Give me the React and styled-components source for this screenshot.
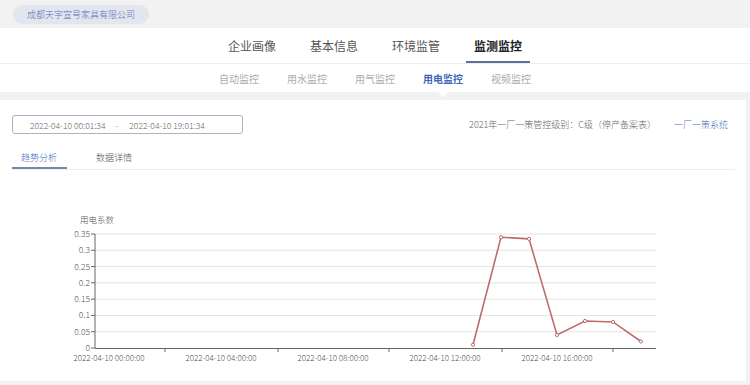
import React from "react"
import styled, { createGlobalStyle } from "styled-components"

const GlobalStyle = createGlobalStyle`
  body {
    margin: 0;
    background: #f2f2f2;
    font-family: "Noto Sans CJK SC", "Noto Sans", sans-serif;
    font-weight: 300;
  }
`

const Page = styled.div`
  width: 750px;
  height: 385px;
  overflow: hidden;
`

const TopBar = styled.div`
  height: 28px;
  display: flex;
  align-items: center;
  padding-left: 13px;
`

const CompanyPill = styled.div`
  height: 19px;
  line-height: 19px;
  padding: 0 14px;
  border-radius: 10px;
  background: #e3e6ef;
  color: #5b74b9;
  font-size: 9px;
`

const Header = styled.div`
  background: #fff;
`

const MainTabs = styled.div`
  height: 36px;
  display: flex;
  justify-content: center;
  gap: 18px;
  border-bottom: 1px solid #eeeeee;
  box-sizing: border-box;
`

const MainTab = styled.div`
  width: 64px;
  box-sizing: border-box;
  display: flex;
  align-items: center;
  justify-content: center;
  font-size: 12px;
  color: ${p => (p.active ? "#222" : "#555")};
  font-weight: ${p => (p.active ? "bold" : "normal")};
  border-bottom: 2px solid ${p => (p.active ? "#5b6f9f" : "transparent")};
  padding-top: 2px;
`

const SubTabs = styled.div`
  height: 28px;
  display: flex;
  justify-content: center;
  gap: 28px;
`

const SubTab = styled.div`
  position: relative;
  width: 40px;
  display: flex;
  align-items: center;
  justify-content: center;
  font-size: 10px;
  color: ${p => (p.active ? "#3d66b8" : "#ababab")};
  font-weight: ${p => (p.active ? "bold" : "normal")};

  ${p =>
    p.active &&
    `
    &::after {
      content: "";
      position: absolute;
      left: 15px;
      bottom: -5px;
      border-left: 5px solid transparent;
      border-right: 5px solid transparent;
      border-top: 5px solid #fff;
    }
  `}
`

const Card = styled.div`
  margin-top: 8px;
  margin-right: 4px;
  height: 281px;
  background: #fff;
  padding: 15px 11px 0 12px;
  box-sizing: border-box;
`

const Toolbar = styled.div`
  display: flex;
  justify-content: space-between;
  align-items: center;
`

const DateRange = styled.div`
  width: 231px;
  height: 19px;
  box-sizing: border-box;
  border: 1px solid #a9b2c7;
  border-radius: 3px;
  display: flex;
  align-items: center;
  padding-left: 17px;
  font-size: 8.5px;
  color: #666;
`

const Separator = styled.span`
  margin: 0 11px 0 10px;
`

const Info = styled.div`
  display: flex;
  align-items: center;
  gap: 18px;
  padding-right: 7px;
  font-size: 9px;
  color: #666;
`

const Link = styled.span`
  color: #4a6fc0;
`

const TabsRow = styled.div`
  margin-top: 13px;
  display: flex;
  gap: 20px;
  border-bottom: 1px solid #eeeeee;
`

const Tab = styled.div`
  height: 20px;
  padding: 0 10px 0 9px;
  display: flex;
  align-items: center;
  font-size: 9px;
  color: ${p => (p.active ? "#4a6fc0" : "#555")};
  border-bottom: 2px solid ${p => (p.active ? "#7486b3" : "transparent")};
`

const ChartSvg = styled.svg`
  display: block;
  margin-left: -12px;
  font-family: "Noto Sans CJK SC", "Noto Sans", sans-serif;
`

const values = [
  null, null, null, null, null, null, null, null, null, null, null, null, null,
  0.01, 0.34, 0.335, 0.04, 0.083, 0.08, 0.02,
]

const X0 = 95
const X1 = 656
const Y0 = 346
const YTOP = 232
const xAt = i => 109 + i * 28
const yAt = v => Y0 - (v / 0.35) * (Y0 - YTOP)

function Chart() {
  const ticks = [0, 0.05, 0.1, 0.15, 0.2, 0.25, 0.3, 0.35]
  const pts = values
    .map((v, i) => (v == null ? null : [xAt(i), yAt(v)]))
    .filter(Boolean)
  const labels = [0, 4, 8, 12, 16]
  return (
    <ChartSvg width="746" height="213" viewBox="0 168 746 213">
      <text x="80" y="221" fontSize="8.5" fill="#555">用电系数</text>
      {ticks.map(t => (
        <g key={t}>
          {t > 0 && (
            <line x1={X0} x2={X1} y1={yAt(t)} y2={yAt(t)} stroke="#e4e4e4" strokeWidth="1" />
          )}
          <line x1={X0 - 4} x2={X0} y1={yAt(t)} y2={yAt(t)} stroke="#666" />
          <text x={X0 - 5} y={yAt(t) + 3} fontSize="8.5" fill="#555" textAnchor="end">
            {String(t)}
          </text>
        </g>
      ))}
      <line x1={X0} x2={X0} y1={YTOP} y2={Y0} stroke="#666" />
      <line x1={X0} x2={X1} y1={Y0 + 0.5} y2={Y0 + 0.5} stroke="#666" />
      {[165, 278, 389, 502, 613].map(x => (
        <line key={x} x1={x} x2={x} y1={Y0} y2={Y0 + 4} stroke="#666" />
      ))}
      {labels.map(h => (
        <text key={h} x={xAt(h)} y="359" fontSize="8" fill="#555" textAnchor="middle">
          {`2022-04-10 ${String(h).padStart(2, "0")}:00:00`}
        </text>
      ))}
      <polyline
        points={pts.map(p => p.join(",")).join(" ")}
        fill="none"
        stroke="#bf6b6e"
        strokeWidth="1.6"
      />
      {pts.map(([x, y]) => (
        <circle key={x} cx={x} cy={y} r="1.6" fill="#fff" stroke="#bf6b6e" strokeWidth="1" />
      ))}
    </ChartSvg>
  )
}

const mainTabs = ["企业画像", "基本信息", "环境监管", "监测监控"]
const subTabs = ["自动监控", "用水监控", "用气监控", "用电监控", "视频监控"]

export default function App() {
  return (
    <Page>
      <GlobalStyle />
      <TopBar>
        <CompanyPill>成都天宇宣号家具有限公司</CompanyPill>
      </TopBar>
      <Header>
        <MainTabs>
          {mainTabs.map(t => (
            <MainTab key={t} active={t === "监测监控"}>{t}</MainTab>
          ))}
        </MainTabs>
        <SubTabs>
          {subTabs.map(t => (
            <SubTab key={t} active={t === "用电监控"}>{t}</SubTab>
          ))}
        </SubTabs>
      </Header>
      <Card>
        <Toolbar>
          <DateRange>
            2022-04-10 00:01:34<Separator>-</Separator>2022-04-10 19:01:34
          </DateRange>
          <Info>
            <span>2021年一厂一策管控级别：C级（停产备案表）</span>
            <Link>一厂一策系统</Link>
          </Info>
        </Toolbar>
        <TabsRow>
          <Tab active>趋势分析</Tab>
          <Tab>数据详情</Tab>
        </TabsRow>
        <Chart />
      </Card>
    </Page>
  )
}
